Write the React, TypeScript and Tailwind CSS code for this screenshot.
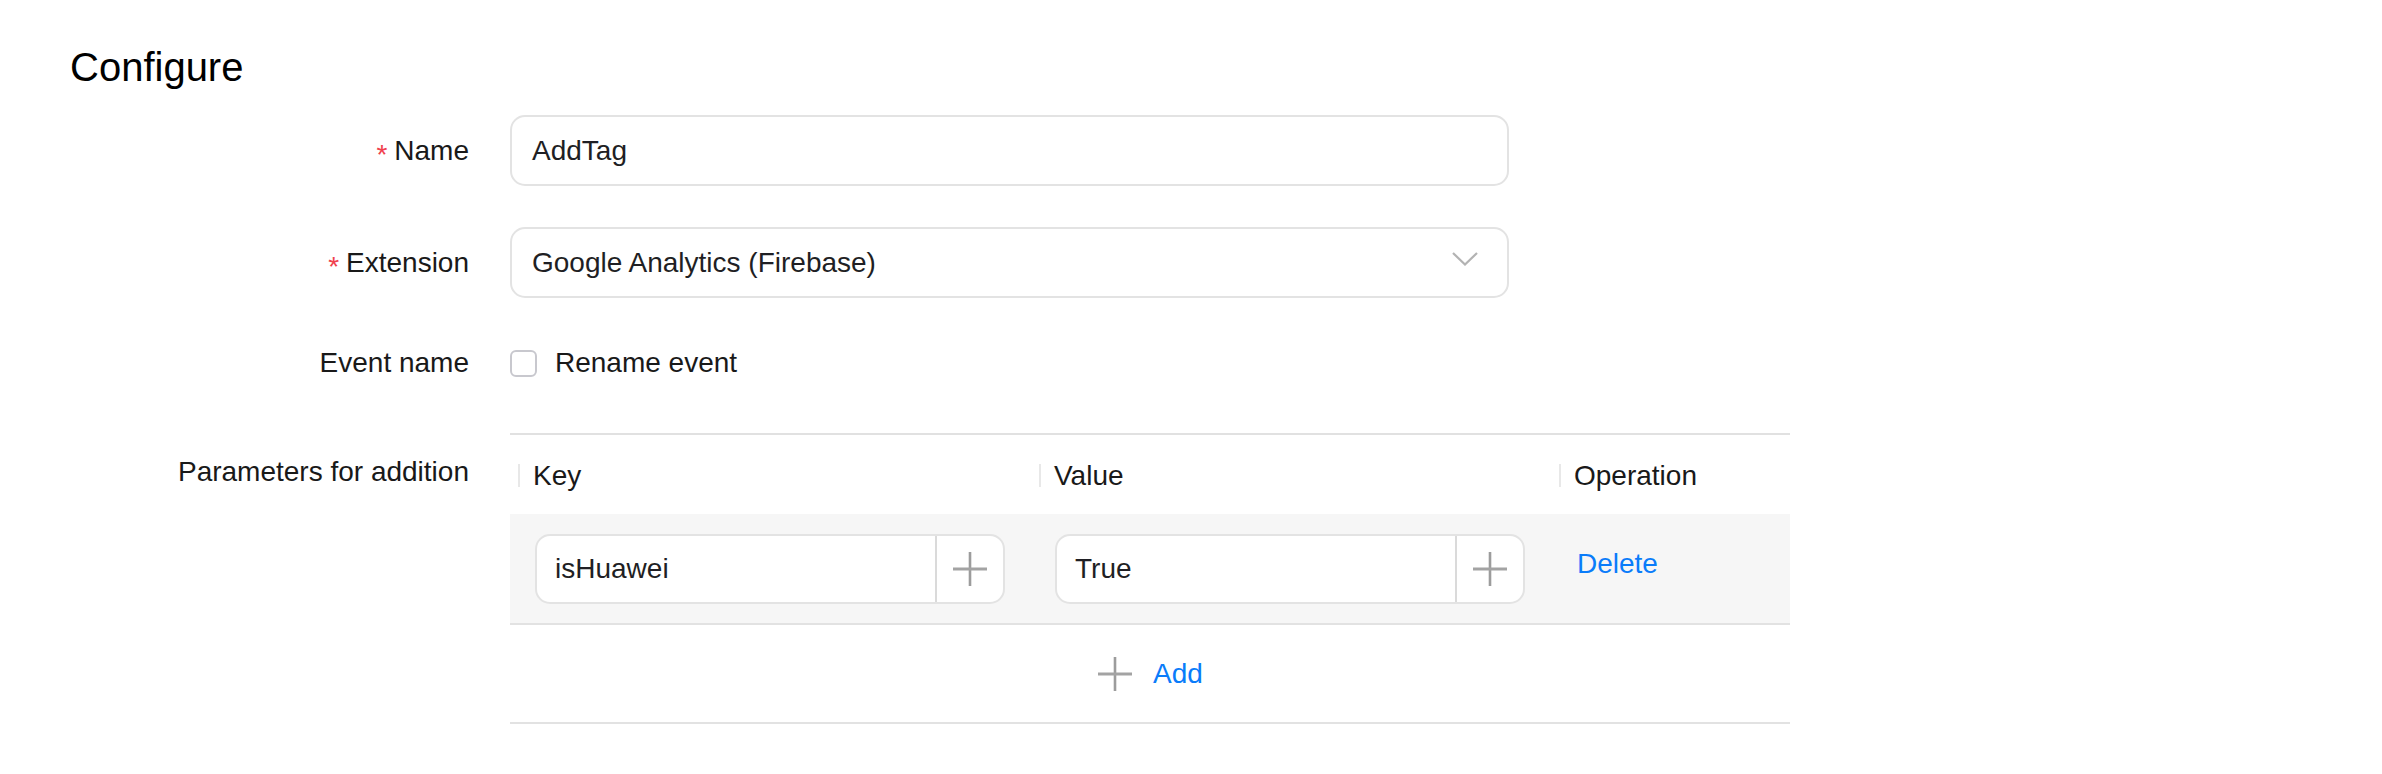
import React from "react";

const Plus = ({ size = 36 }: { size?: number }) => (
  <svg width={size} height={size} viewBox="0 0 36 36" fill="none">
    <line x1="18" y1="1" x2="18" y2="35" stroke="#9c9c9c" strokeWidth="2.6" />
    <line x1="1" y1="18" x2="35" y2="18" stroke="#a3a3a3" strokeWidth="2.8" />
  </svg>
);

const Chevron = () => (
  <svg width="26" height="14" viewBox="0 0 26 14" fill="none">
    <polyline points="1,1 13,12.5 25,1" stroke="#b3b3b3" strokeWidth="2.2" fill="none" />
  </svg>
);

const Required = () => (
  <span className="relative top-[4px] mr-[7px] text-[28px] leading-none text-[#f0414d]">*</span>
);

const InputWithPlus = ({ value }: { value: string }) => (
  <div className="flex h-[70px] w-[470px] overflow-hidden rounded-[15px] border-2 border-[#e3e3e3] bg-white">
    <div className="flex flex-1 items-center pl-[18px] text-[28px] text-[#1f1f24]">{value}</div>
    <div className="flex w-[68px] items-center justify-center border-l-2 border-[#dadada]">
      <Plus />
    </div>
  </div>
);

const HeaderCell = ({ label }: { label: string }) => (
  <div className="flex items-center pt-[2px]">
    <span className="ml-[8px] h-[23px] w-[2px] bg-[#e8e8e8]" />
    <span className="ml-[13px] text-[28px] text-[#191919]">{label}</span>
  </div>
);

export default function App() {
  return (
    <div className="h-[774px] w-full bg-white font-['Liberation_Sans',Arial,sans-serif] text-[#191919]">
      <div className="pl-[70px] pt-[45px]">
        <h1 className="text-[40px] font-normal leading-[45px] text-black">Configure</h1>

        <div className="mt-[25px] flex flex-col">
          {/* Name */}
          <div className="flex h-[71px] items-center">
            <div className="flex w-[399px] items-center justify-end text-[28px]">
              <Required />
              <span>Name</span>
            </div>
            <div className="ml-[41px] flex h-[71px] w-[999px] items-center rounded-[15px] border-2 border-[#e3e3e3] pl-[20px] text-[28px] text-[#1f1f24]">
              AddTag
            </div>
          </div>

          {/* Extension */}
          <div className="mt-[41px] flex h-[71px] items-center">
            <div className="flex w-[399px] items-center justify-end text-[28px]">
              <Required />
              <span>Extension</span>
            </div>
            <div className="ml-[41px] flex h-[71px] w-[999px] items-center justify-between rounded-[15px] border-2 border-[#e3e3e3] pl-[20px] pr-[29px] text-[28px] text-[#1f1f24]">
              <span>Google Analytics (Firebase)</span>
              <span className="mb-[8px] flex">
                <Chevron />
              </span>
            </div>
          </div>

          {/* Event name */}
          <div className="mt-[41px] flex h-[48px] items-center">
            <div className="w-[399px] text-right text-[28px]">Event name</div>
            <div className="ml-[41px] flex items-center">
              <span className="h-[27px] w-[27px] rounded-[6px] border-2 border-[#c8c8ce] bg-white" />
              <span className="ml-[18px] text-[28px]">Rename event</span>
            </div>
          </div>

          {/* Parameters */}
          <div className="mt-[46px] flex items-start">
            <div className="w-[399px] text-right text-[28px] leading-[78px]">Parameters for addition</div>
            <div className="ml-[41px] w-[1280px] border-t-2 border-[#e1e1e1]">
              <div className="grid h-[79px] grid-cols-[521px_520px_239px] items-center">
                <HeaderCell label="Key" />
                <HeaderCell label="Value" />
                <HeaderCell label="Operation" />
              </div>
              <div className="grid h-[111px] grid-cols-[521px_520px_239px] items-center border-b-2 border-[#e2e2e2] bg-[#f6f6f6]">
                <div className="pl-[25px]">
                  <InputWithPlus value="isHuawei" />
                </div>
                <div className="pl-[24px]">
                  <InputWithPlus value="True" />
                </div>
                <div className="mb-[9px] pl-[26px] text-[28px] text-[#0a7cfa]">Delete</div>
              </div>
              <div className="flex h-[99px] items-center justify-center border-b-2 border-[#e2e2e2]">
                <Plus />
                <span className="ml-[20px] text-[28px] text-[#0a7cfa]">Add</span>
              </div>
            </div>
          </div>
        </div>
      </div>
    </div>
  );
}
